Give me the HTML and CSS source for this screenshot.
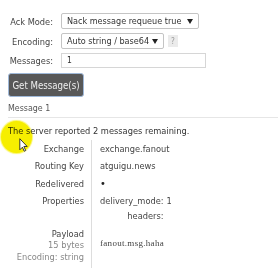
FILE: index.html
```html
<!DOCTYPE html>
<html>
<head>
<meta charset="utf-8">
<link rel="stylesheet" href="styles.css">
</head>
<body>
<div class="cut"></div>
<div class="form">
  <label class="lbl">Ack Mode:</label>
  <div class="select s1"><span>Nack message requeue true</span><svg class="arr" width="6" height="5" viewBox="0 0 6 5"><path d="M0 0H6L3 5Z" fill="#222"/></svg></div>
  <label class="lbl">Encoding:</label>
  <div class="enc"><div class="select s2"><span>Auto string / base64</span><svg class="arr" width="6" height="5" viewBox="0 0 6 5"><path d="M0 0H6L3 5Z" fill="#222"/></svg></div><span class="help">?</span></div>
  <label class="lbl">Messages:</label>
  <div class="input">1</div>
</div>
<button class="btn">Get Message(s)</button>
<div class="msghead">Message 1</div>
<p class="info">The server reported 2 messages remaining.</p>
<table class="facts">
  <tr><th>Exchange</th><td>exchange.fanout</td></tr>
  <tr><th>Routing Key</th><td>atguigu.news</td></tr>
  <tr><th>Redelivered</th><td><span class="dot">&#8226;</span></td></tr>
  <tr><th>Properties</th><td>
    <table class="props">
      <tr><th>delivery_mode:</th><td>1</td></tr>
      <tr><th>headers:</th><td></td></tr>
    </table>
  </td></tr>
  <tr class="payload"><th>Payload<br><span class="sub">15 bytes</span><br><span class="sub">Encoding: string</span></th><td><pre>fanout.msg.haha</pre></td></tr>
</table>
<div class="spot"></div>
<svg class="cursor" width="9" height="14" viewBox="0 0 12 19"><path d="M1 1L1 16L4.5 12.5L7 18L9 17L6.5 11.5L11 11.5Z" fill="#fff" stroke="#222" stroke-width="1.2" stroke-linejoin="round"/></svg>
</body>
</html>
```
FILE: styles.css
```css
html, body { margin: 0; padding: 0; background: #fff; }
body {
  font-family: "DejaVu Sans Condensed", "DejaVu Sans", sans-serif;
  font-size: 9.2px;
  color: #444;
  position: relative;
  width: 278px;
  height: 273px;
  overflow: hidden;
}
.cut { height: 3px; }
.form {
  display: grid;
  grid-template-columns: 45px auto;
  column-gap: 8px;
  row-gap: 4px;
  padding: 10px 0 0 8px;
  align-items: center;
  justify-items: start;
}
.lbl { justify-self: end; color: #444; }
.select {
  box-sizing: border-box;
  height: 16px;
  border: 1px solid #c4c4c4;
  border-radius: 2px;
  display: flex;
  align-items: center;
  justify-content: space-between;
  padding: 0 5px 0 5px;
  color: #333;
  background: #fff;
  font-size: 9px;
}
.s1 { width: 138px; }
.s2 { width: 103px; }
.enc { display: flex; align-items: center; gap: 4px; }
.help {
  width: 10px; height: 12px;
  background: #ebebeb;
  color: #999;
  font-size: 8px;
  display: flex; align-items: center; justify-content: center;
}
.input {
  box-sizing: border-box;
  width: 145px; height: 15px;
  border: 1px solid #d6d6d6;
  padding-left: 5px;
  line-height: 13px;
  color: #333;
  font-size: 8.5px;
}
.btn {
  display: block;
  margin: 5px 0 0 8px;
  width: 76px; height: 24px;
  background: #585858;
  color: #eee;
  border: 1px solid #9fb8d8;
  border-radius: 3px;
  font-family: inherit;
  font-size: 9.6px;
  padding: 0;
}
.msghead {
  margin: 6px 0 0 8px;
  padding-bottom: 3px;
  line-height: 11px;
  border-bottom: 1px solid #e6e6e6;
  color: #555;
  font-size: 8.8px;
}
.info { margin: 7px 0 0 8px; line-height: 11.5px; color: #333; }
.facts { border-collapse: collapse; margin: 3px 0 0 8px; }
.facts > tbody > tr > th {
  width: 76px;
  text-align: right;
  font-weight: normal;
  vertical-align: top;
  padding: 3px 7px 3px 0;
  line-height: 11.5px;
  border-right: 1px solid #ddd;
  color: #444;
  white-space: nowrap;
}
.facts > tbody > tr > td {
  padding: 3px 0 3px 8px;
  line-height: 11.5px;
    vertical-align: top;
  color: #444;
}
.dot { font-size: 11px; color: #222; }
.props { border-collapse: collapse; }
.props th { width: 63px; text-align: right; font-weight: normal; padding: 0 3px 3.5px 0; line-height: 11.5px; color: #444; }
.props td { padding: 0 0 3.5px 0; line-height: 11.5px; }
.props tr:last-child th, .props tr:last-child td { padding-bottom: 0; }
.payload > th { padding-bottom: 6px !important; }
.payload > td { padding-top: 13px !important; }
.sub { color: #888; }
pre {
  margin: 0;
  font-family: "Liberation Serif", serif;
  font-size: 9px;
  letter-spacing: 0.3px;
  color: #444;
}
.spot {
  position: absolute;
  left: 1px; top: 121px;
  width: 31px; height: 32px;
  border-radius: 50%;
  background: #f6ee00;
  mix-blend-mode: multiply;
  box-shadow: 0 0 1px 1px rgba(246,238,0,0.6);
}
.cursor { position: absolute; left: 19px; top: 138px; }
```
